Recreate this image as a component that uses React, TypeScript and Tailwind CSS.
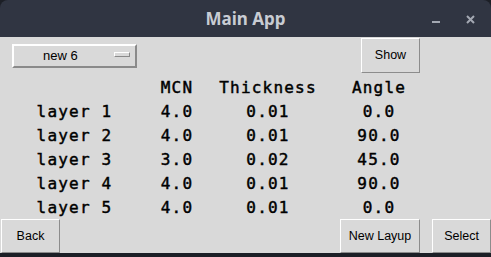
import React from "react";

const mono = { fontFamily: '"DejaVu Sans Mono", "Liberation Mono", monospace' };
const sans = { fontFamily: '"Liberation Sans", Arial, sans-serif' };

const rows = [
  ["layer 1", "4.0", "0.01", "0.0"],
  ["layer 2", "4.0", "0.01", "90.0"],
  ["layer 3", "3.0", "0.02", "45.0"],
  ["layer 4", "4.0", "0.01", "90.0"],
  ["layer 5", "4.0", "0.01", "0.0"],
];

function TkButton({ label, className }: { label: string; className: string }) {
  return (
    <div
      className={`flex items-center justify-center bg-[#d9d9d9] border border-t-white border-l-white border-r-[#8c8c8c] border-b-[#8c8c8c] text-[12.5px] text-black ${className}`}
      style={sans}
    >
      {label}
    </div>
  );
}

function Row({ cells }: { cells: string[] }) {
  return (
    <div
      className="grid grid-cols-[149px_56px_126px_96px] h-[24px] items-center text-[16px] font-normal tracking-[1.2px] text-black leading-none [-webkit-text-stroke:0.45px_black]"
      style={mono}
    >
      {cells.map((c, i) => (
        <div key={i} className="text-center whitespace-pre">
          {c}
        </div>
      ))}
    </div>
  );
}

export default function App() {
  return (
    <div className="w-[491px] h-[257px] bg-[#1c1f26] overflow-hidden flex flex-col">
      <div className="h-[37px] shrink-0 bg-[#303542] rounded-t-[8px] relative flex items-center justify-center">
        <span className="text-[17px] font-bold text-[#c8ccd3]" style={{ fontFamily: '"Noto Sans", "Open Sans", sans-serif' }}>
          Main App
        </span>
        <div className="absolute left-[432px] top-[21px] w-[8px] h-[2px] bg-[#a3a8b2]" />
        <svg className="absolute left-[466px] top-[15px]" width="9" height="9" viewBox="0 0 9 9">
          <path d="M1 1 L8 8 M8 1 L1 8" stroke="#a3a8b2" strokeWidth="2" />
        </svg>
      </div>
      <div className="h-[216px] shrink-0 bg-[#d9d9d9] flex flex-col">
        <div className="h-[39px] shrink-0 flex items-start">
          <div className="ml-[12px] mt-[7px] w-[125px] h-[24px] border-2 border-t-white border-l-white border-r-[#8a8a8a] border-b-[#8a8a8a] relative flex items-center">
            <span className="ml-[29px] text-[13px] text-black" style={sans}>
              new 6
            </span>
            <div className="absolute left-[100px] top-[6px] w-[16px] h-[5px] border border-t-white border-l-white border-r-[#8a8a8a] border-b-[#8a8a8a] bg-[#d9d9d9]" />
          </div>
          <TkButton label="Show" className="ml-[224px] mt-[1px] w-[59px] h-[35px]" />
        </div>
        <div className="h-[143px] shrink-0">
          <Row cells={["", "MCN", "Thickness", "Angle"]} />
          {rows.map((r, i) => (
            <Row key={i} cells={r} />
          ))}
        </div>
        <div className="h-[34px] shrink-0 flex">
          <TkButton label="Back" className="ml-[1px] w-[59px] h-[34px]" />
          <TkButton label="New Layup" className="ml-auto w-[80px] h-[34px]" />
          <TkButton label="Select" className="ml-[12px] w-[59px] h-[34px]" />
        </div>
      </div>
      <div className="flex-1 bg-[#1c1f26]" />
    </div>
  );
}
